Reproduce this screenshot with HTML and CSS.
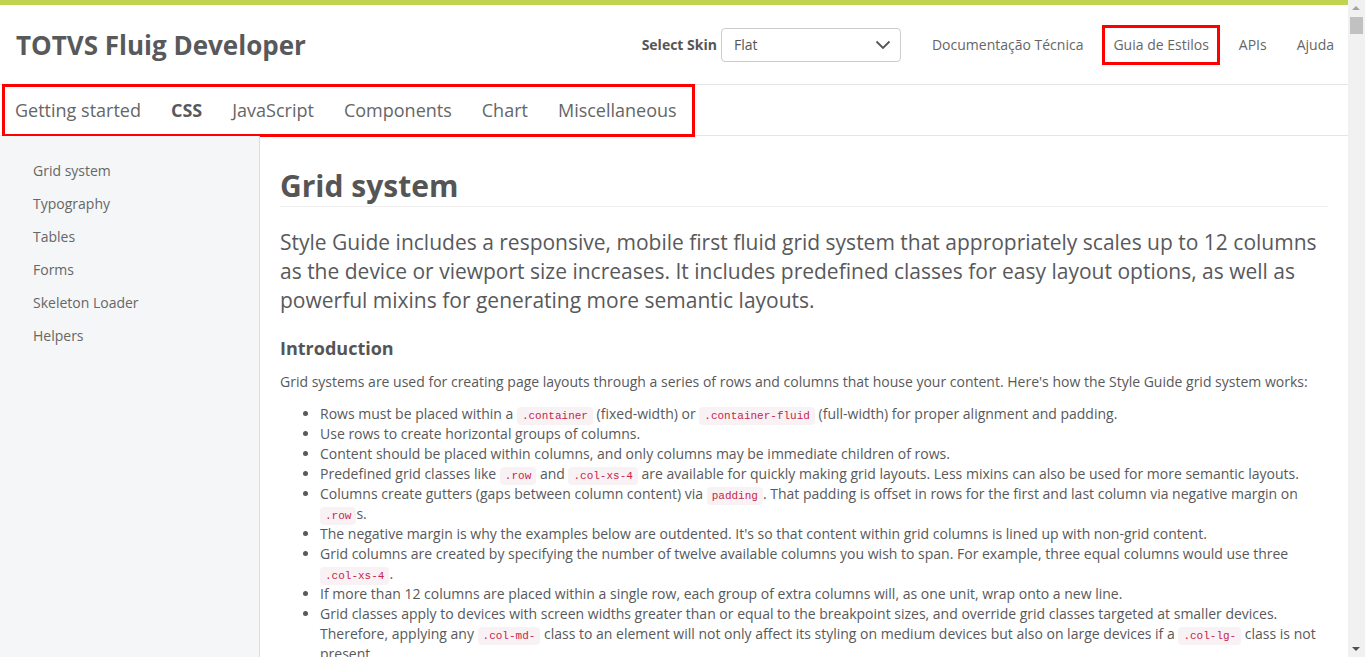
FILE: index.html
```html
<!DOCTYPE html>
<html lang="en">
<head>
<meta charset="utf-8">
<title>TOTVS Fluig Developer - Style Guide</title>
<link rel="stylesheet" href="styles.css">
</head>
<body>
<div class="page">
  <header class="header">
    <div class="brand">TOTVS Fluig Developer</div>
    <div class="header-right">
      <label class="skin-label">Select Skin</label>
      <div class="select">
        <span>Flat</span>
        <svg class="chev" width="16" height="10" viewBox="0 0 16 10"><path d="M1.5 1.5 L8 8 L14.5 1.5" fill="none" stroke="#555" stroke-width="1.8"/></svg>
      </div>
      <nav class="top-links">
        <a class="top-link">Documentação Técnica</a>
        <a class="top-link boxed">Guia de Estilos</a>
        <a class="top-link">APIs</a>
        <a class="top-link">Ajuda</a>
      </nav>
    </div>
  </header>
  <div class="subnav">
    <div class="subnav-box">
      <a class="sub-item">Getting started</a>
      <a class="sub-item active">CSS</a>
      <a class="sub-item">JavaScript</a>
      <a class="sub-item">Components</a>
      <a class="sub-item">Chart</a>
      <a class="sub-item">Miscellaneous</a>
    </div>
  </div>
  <div class="main">
    <aside class="sidebar">
      <a class="side-item">Grid system</a>
      <a class="side-item">Typography</a>
      <a class="side-item">Tables</a>
      <a class="side-item">Forms</a>
      <a class="side-item">Skeleton Loader</a>
      <a class="side-item">Helpers</a>
    </aside>
    <section class="content">
      <h1 class="page-title">Grid system</h1>
      <p class="lead">Style Guide includes a responsive, mobile first fluid grid system that appropriately scales up to 12 columns as the device or viewport size increases. It includes predefined classes for easy layout options, as well as powerful mixins for generating more semantic layouts.</p>
      <h3 class="sub-title">Introduction</h3>
      <p class="text">Grid systems are used for creating page layouts through a series of rows and columns that house your content. Here's how the Style Guide grid system works:</p>
      <ul class="list">
        <li>Rows must be placed within a <code>.container</code> (fixed-width) or <code>.container-fluid</code> (full-width) for proper alignment and padding.</li>
        <li>Use rows to create horizontal groups of columns.</li>
        <li>Content should be placed within columns, and only columns may be immediate children of rows.</li>
        <li>Predefined grid classes like <code>.row</code> and <code>.col-xs-4</code> are available for quickly making grid layouts. Less mixins can also be used for more semantic layouts.</li>
        <li>Columns create gutters (gaps between column content) via <code>padding</code>. That padding is offset in rows for the first and last column via negative margin on <code>.row</code>s.</li>
        <li>The negative margin is why the examples below are outdented. It's so that content within grid columns is lined up with non-grid content.</li>
        <li>Grid columns are created by specifying the number of twelve available columns you wish to span. For example, three equal columns would use three <code>.col-xs-4</code>.</li>
        <li>If more than 12 columns are placed within a single row, each group of extra columns will, as one unit, wrap onto a new line.</li>
        <li>Grid classes apply to devices with screen widths greater than or equal to the breakpoint sizes, and override grid classes targeted at smaller devices. Therefore, applying any <code>.col-md-</code> class to an element will not only affect its styling on medium devices but also on large devices if a <code>.col-lg-</code> class is not present.</li>
      </ul>
    </section>
  </div>
</div>
<div class="scrollbar">
  <div class="sb-arrow up"></div>
  <div class="sb-thumb"></div>
  <div class="sb-track"></div>
  <div class="sb-arrow down"></div>
</div>
</body>
</html>
```
FILE: styles.css
```css
html, body {
  margin: 0;
  padding: 0;
  height: 100%;
  overflow: hidden;
}
body {
  font-family: "Open Sans", "Liberation Sans", sans-serif;
  color: #58595b;
  background: #fff;
}
a { cursor: pointer; }
.page {
  width: calc(100% - 17px);
  border-top: 5px solid #c1d34f;
  box-sizing: border-box;
  height: 100%;
  display: flex;
  flex-direction: column;
}
.header {
  height: 79px;
  border-bottom: 1px solid #e5e5e5;
  display: flex;
  align-items: center;
  justify-content: space-between;
  padding-left: 16px;
  padding-right: 0;
  flex-shrink: 0;
}
.brand {
  font-size: 26px;
  font-weight: 700;
  color: #58595b;
}
.header-right {
  display: flex;
  align-items: center;
  margin-right: -1px;
}
.skin-label {
  font-size: 14px;
  font-weight: 700;
  color: #555;
  margin-right: 4px;
}
.select {
  width: 180px;
  height: 34px;
  box-sizing: border-box;
  border: 1px solid #ccc;
  border-radius: 4px;
  display: flex;
  align-items: center;
  justify-content: space-between;
  padding: 0 9px 0 12px;
  font-size: 14px;
  color: #555;
  margin-right: 16px;
}
.chev { display: block; }
.top-links {
  display: flex;
  align-items: center;
}
.top-link {
  font-size: 14px;
  color: #666;
  padding: 0 15px;
  line-height: 34px;
}
.boxed {
  border: 3px solid #f00;
  padding: 0 8px;
  margin: 0 4px;
  line-height: 34px;
}
.subnav {
  height: 50px;
  border-bottom: 1px solid #e5e5e5;
  display: flex;
  align-items: center;
  flex-shrink: 0;
}
.subnav-box {
  height: 53px;
  box-sizing: border-box;
  border: 3px solid #f00;
  margin-left: 2px;
  padding: 0 15px 0 10px;
  display: flex;
  align-items: center;
  gap: 30px;
}
.sub-item {
  font-size: 18px;
  color: #666;
}
.sub-item.active {
  font-weight: 700;
  color: #58595b;
}
.main {
  flex: 1;
  display: flex;
  min-height: 0;
}
.sidebar {
  width: 259px;
  flex-shrink: 0;
  background: #f5f6f8;
  border-right: 1px solid #dcdde0;
  padding-top: 18px;
  display: flex;
  flex-direction: column;
}
.side-item {
  font-size: 14px;
  line-height: 33px;
  padding-left: 33px;
  color: #666;
}
.content {
  flex: 1;
  padding: 0 20px;
  min-width: 0;
}
.page-title {
  font-size: 30px;
  font-weight: 700;
  line-height: 36px;
  margin: 32px 0 0;
  padding-bottom: 2px;
  border-bottom: 1px solid #eee;
  color: #555;
}
.lead {
  font-size: 21px;
  line-height: 29px;
  margin: 21px 0 0;
  font-weight: 400;
}
.sub-title {
  font-size: 18px;
  font-weight: 700;
  line-height: 24px;
  margin: 21px 0 0;
  color: #555;
}
.text {
  font-size: 14px;
  line-height: 20px;
  margin: 12px 0 0;
}
.list {
  font-size: 14px;
  line-height: 20px;
  margin: 12px 0 0;
  padding-left: 40px;
}
code {
  font-family: "Liberation Mono", "DejaVu Sans Mono", monospace;
  font-size: 11px;
  line-height: 12px;
  color: #c7254e;
  background: #f9f2f4;
  padding: 3px 5px;
  border-radius: 4px;
}
.scrollbar {
  position: fixed;
  top: 0;
  right: 0;
  width: 17px;
  height: 100%;
  background: #f1f1f1;
  display: flex;
  flex-direction: column;
  align-items: center;
}
.sb-arrow {
  width: 17px;
  height: 17px;
  position: relative;
  flex-shrink: 0;
}
.sb-arrow::after {
  content: "";
  position: absolute;
  left: 4px;
  border-left: 4px solid transparent;
  border-right: 4px solid transparent;
}
.sb-arrow.up::after {
  top: 6px;
  border-bottom: 4px solid #a3a3a3;
}
.sb-arrow.down::after {
  top: 7px;
  border-top: 4px solid #505050;
}
.sb-thumb {
  width: 13px;
  height: 17px;
  background: #c1c1c1;
  flex-shrink: 0;
}
.sb-track { flex: 1; }
```
